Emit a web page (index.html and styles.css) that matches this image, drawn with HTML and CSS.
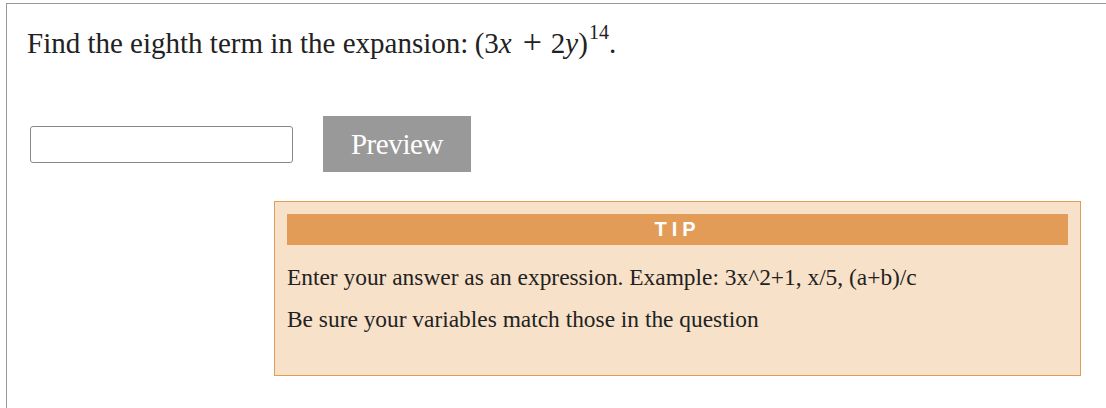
FILE: index.html
```html
<!DOCTYPE html>
<html>
	<head>
		<meta charset="utf-8">
		<title>Question</title>
		<link rel="stylesheet" href="styles.css">
	</head>
	<body>
		<div class="question">
			<p class="prompt">Find the eighth term in the expansion: <span class="math">(3<i>x</i><span class="op">+</span>2<i>y</i>)<sup>14</sup></span>.</p>
			<div class="answer">
				<input type="text" class="answer-input">
				<button class="preview">Preview</button>
			</div>
			<div class="tip">
				<div class="tip-head">TIP</div>
				<p>Enter your answer as an expression. Example: 3x^2+1, x/5, (a+b)/c</p>
				<p>Be sure your variables match those in the question</p>
			</div>
		</div>
	</body>
</html>
```

FILE: styles.css
```css
*{margin:0;padding:0;box-sizing:border-box}
body{
	font-family: "Liberation Serif", "Times New Roman", serif;
	color:#222;
	background:#fff;
}
.question{
	margin:3px 0 0 6px;
	height:405px;
	border-top:1px solid #999;
	border-left:1px solid #999;
	padding:0 0 0 20px;
}
.prompt{
	font-size:29px;
	padding-top:23px;
	line-height:32px;
}
.math{font-size:29px;margin-left:-1px;}
.math i{font-style:italic;}
.math .op{font-size:34px;margin:0 9px 0 11px;line-height:0;}
.math sup{font-size:20px;vertical-align:14px;line-height:0;margin:0 0 0 1px;}
.answer{
	display:flex;
	align-items:center;
	margin-top:57px;
	padding-left:3px;
}
.answer-input{
	width:263px;
	height:37px;
	border:1px solid #888;
	border-radius:3px;
}
.preview{
	margin-left:30px;
	width:148px;
	height:56px;
	border:none;
	background:#999;
	color:#fff;
	font-family: "Liberation Serif", "Times New Roman", serif;
	font-size:29px;
	letter-spacing:-0.4px;
}
.tip{
	margin:29px 0 0 247px;
	width:807px;
	height:175px;
	background:#f8e1c9;
	border:1px solid #e39c58;
	padding:12px;
}
.tip-head{
	background:#e39c58;
	color:#fff;
	text-align:center;
	font-family: "Liberation Sans", Arial, sans-serif;
	font-weight:bold;
	font-size:20px;
	letter-spacing:5px;
	height:31px;
	line-height:31px;
}
.tip p{
	font-size:23.4px;
	margin-top:20px;
	line-height:24px;
}
.tip p + p{margin-top:18px;}
```
